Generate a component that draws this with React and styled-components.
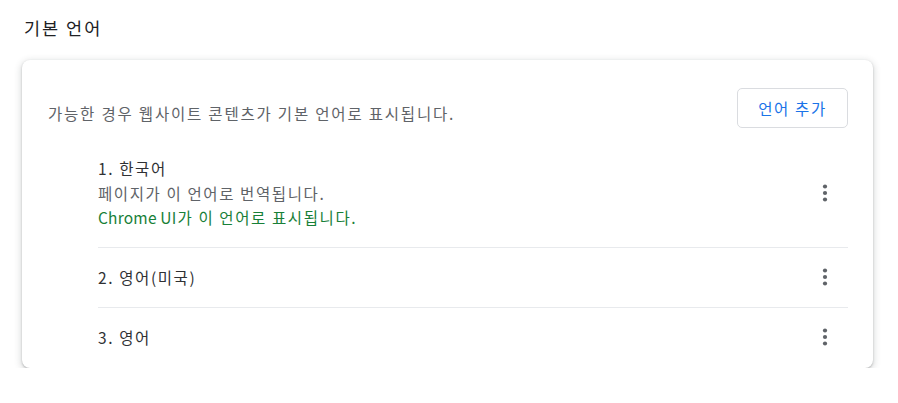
import styled, { createGlobalStyle } from "styled-components";

const GlobalStyle = createGlobalStyle`
  body {
    margin: 0;
    background: #ffffff;
    font-family: "Noto Sans CJK KR", "Noto Sans", sans-serif;
    color: #202124;
  }
`;

const Page = styled.div`
  padding: 14px 25px 0 22px;
`;

const Title = styled.h2`
  margin: 0 0 18px 2px;
  font-size: 17.5px;
  font-weight: 400;
  line-height: 28px;
  letter-spacing: 2px;
  color: #202124;
`;

const Card = styled.div`
  width: 851px;
  border-radius: 8px;
  background: #fff;
  box-shadow: 0 1px 2px rgba(60, 64, 67, 0.3), 0 2px 6px 2px rgba(60, 64, 67, 0.15);
  padding: 28px 25px 1px 26px;
  box-sizing: border-box;
`;

const Head = styled.div`
  display: flex;
  align-items: center;
  justify-content: space-between;
  margin-bottom: 16px;
`;

const Desc = styled.div`
  font-size: 15.5px;
  letter-spacing: 1.8px;
  color: #5f6368;
  padding-top: 10px;
`;

const AddButton = styled.button`
  height: 40px;
  width: 111px;
  border: 1px solid #dadce0;
  border-radius: 5px;
  background: #fff;
  color: #1a73e8;
  font-family: inherit;
  font-size: 15.5px;
  letter-spacing: 1.6px;
  cursor: pointer;
`;

const List = styled.div`
  margin-left: 50px;
`;

const Item = styled.div`
  display: flex;
  align-items: center;
  justify-content: space-between;
  min-height: 60px;
  padding: ${(p) => (p.$tall ? "12px 0 17px" : "0")};
  border-top: ${(p) => (p.$first ? "none" : "1px solid #e8eaed")};
  box-sizing: border-box;
`;

const Lines = styled.div`
  font-size: 15.5px;
  line-height: 24.5px;
  letter-spacing: 1.6px;
  color: #303134;
`;

const Line = styled.div`
  color: ${(p) => p.$color || "#303134"};
`;

const Latin = styled.span`
  letter-spacing: 0.2px;
  margin-right: 1px;
`;

const More = styled.button`
  width: 36px;
  height: 36px;
  margin-right: 5px;
  border: none;
  background: none;
  padding: 0;
  display: flex;
  align-items: center;
  justify-content: center;
  cursor: pointer;
`;

function Kebab() {
  return (
    <More>
      <svg width="20" height="20" viewBox="0 0 20 20">
        <circle cx="10" cy="3.5" r="2.1" fill="#5f6368" />
        <circle cx="10" cy="10" r="2.1" fill="#5f6368" />
        <circle cx="10" cy="16.5" r="2.1" fill="#5f6368" />
      </svg>
    </More>
  );
}

export default function App() {
  return (
    <Page>
      <GlobalStyle />
      <Title>기본 언어</Title>
      <Card>
        <Head>
          <Desc>가능한 경우 웹사이트 콘텐츠가 기본 언어로 표시됩니다.</Desc>
          <AddButton>언어 추가</AddButton>
        </Head>
        <List>
          <Item $first $tall>
            <Lines>
              <Line>1. 한국어</Line>
              <Line $color="#5f6368">페이지가 이 언어로 번역됩니다.</Line>
              <Line $color="#188038">
                <Latin>Chrome UI</Latin>가 이 언어로 표시됩니다.
              </Line>
            </Lines>
            <Kebab />
          </Item>
          <Item>
            <Lines>2. 영어(미국)</Lines>
            <Kebab />
          </Item>
          <Item>
            <Lines>3. 영어</Lines>
            <Kebab />
          </Item>
        </List>
      </Card>
    </Page>
  );
}
